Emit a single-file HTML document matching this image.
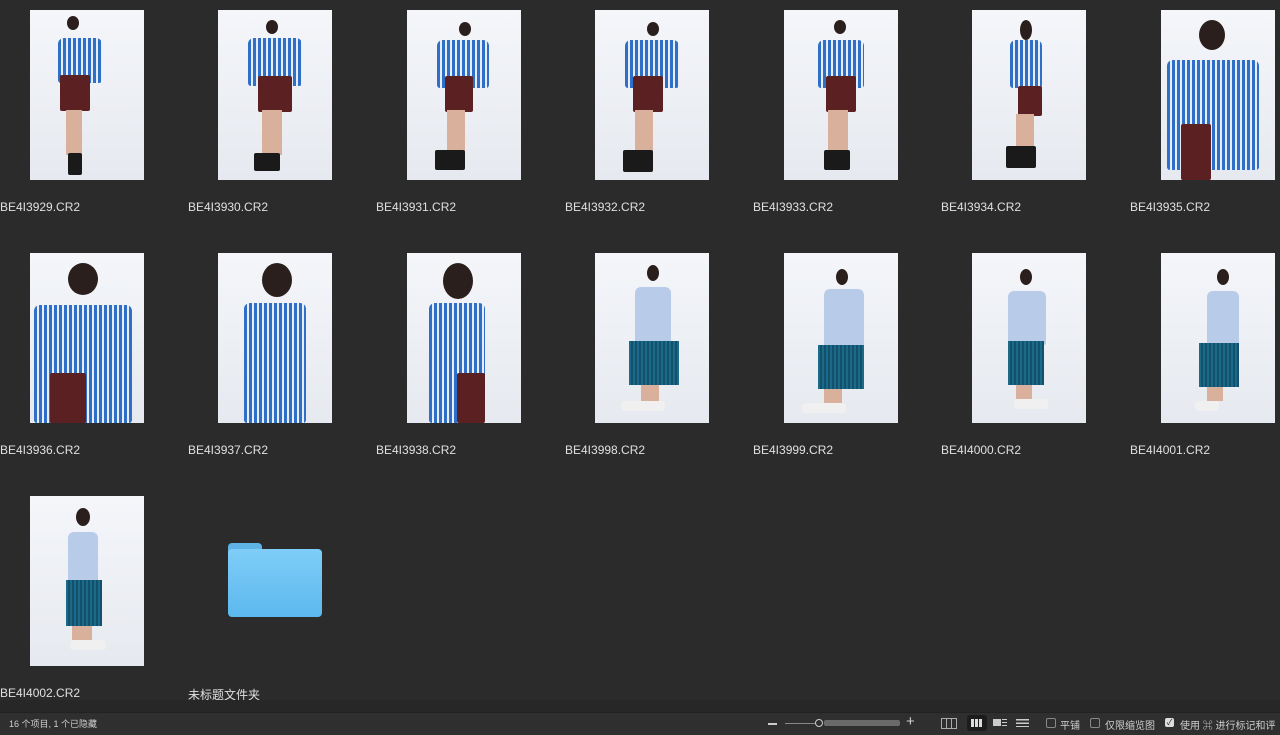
<!DOCTYPE html>
<html><head><meta charset="utf-8"><style>
body{margin:0;width:1280px;height:734px;background:#2b2b2b;overflow:hidden;position:relative;font-family:"Liberation Sans","Noto Sans CJK SC",sans-serif}
.t{position:absolute;width:114px;height:170px;background:linear-gradient(#f4f6fa,#e6e9ef);overflow:hidden}
.t div{position:absolute}
.h{background:#2a1f1c;border-radius:50%}
.s{background:repeating-linear-gradient(90deg,#2f6fc8 0 3px,#e8eef8 3px 5px);border-radius:6px 6px 3px 3px}
.m{background:#5a2022;border-radius:2px}
.l{background:#d8b09c}
.b{background:#1a1a1a;border-radius:2px}
.ls{background:#b8cbe8;border-radius:6px 6px 2px 2px}
.tk{background:repeating-linear-gradient(90deg,#1c6a8a 0 2px,#13506c 2px 4px)}
.w{background:#f0f0f0;border-radius:3px}
.lb{position:absolute;color:#e0e0e0;font-size:12px}
.bar{position:absolute;left:0;top:712px;width:1280px;height:22px;background:#2f2f2f;border-top:1px solid #222}
.bt{position:absolute;top:4px;font-size:10px;color:#cfcfcf}
</style></head><body>

<!-- Row 1 -->
<div class="t" style="left:30px;top:10px"><div class="h" style="left:37px;top:6px;width:12px;height:14px"></div><div class="s" style="left:28px;top:28px;width:44px;height:45px"></div><div class="m" style="left:30px;top:65px;width:30px;height:36px"></div><div class="l" style="left:36px;top:100px;width:16px;height:45px"></div><div class="b" style="left:38px;top:143px;width:14px;height:22px"></div></div>
<div class="t" style="left:218px;top:10px"><div class="h" style="left:48px;top:10px;width:12px;height:14px"></div><div class="s" style="left:30px;top:28px;width:54px;height:48px"></div><div class="m" style="left:40px;top:66px;width:34px;height:36px"></div><div class="l" style="left:44px;top:100px;width:20px;height:45px"></div><div class="b" style="left:36px;top:143px;width:26px;height:18px"></div></div>
<div class="t" style="left:407px;top:10px"><div class="h" style="left:52px;top:12px;width:12px;height:14px"></div><div class="s" style="left:30px;top:30px;width:52px;height:48px"></div><div class="m" style="left:38px;top:66px;width:28px;height:36px"></div><div class="l" style="left:40px;top:100px;width:18px;height:45px"></div><div class="b" style="left:28px;top:140px;width:30px;height:20px"></div></div>
<div class="t" style="left:595px;top:10px"><div class="h" style="left:52px;top:12px;width:12px;height:14px"></div><div class="s" style="left:30px;top:30px;width:54px;height:48px"></div><div class="m" style="left:38px;top:66px;width:30px;height:36px"></div><div class="l" style="left:40px;top:100px;width:18px;height:45px"></div><div class="b" style="left:28px;top:140px;width:30px;height:22px"></div></div>
<div class="t" style="left:784px;top:10px"><div class="h" style="left:50px;top:10px;width:12px;height:14px"></div><div class="s" style="left:34px;top:30px;width:46px;height:48px"></div><div class="m" style="left:42px;top:66px;width:30px;height:36px"></div><div class="l" style="left:44px;top:100px;width:20px;height:45px"></div><div class="b" style="left:40px;top:140px;width:26px;height:20px"></div></div>
<div class="t" style="left:972px;top:10px"><div class="h" style="left:48px;top:10px;width:12px;height:20px"></div><div class="s" style="left:38px;top:30px;width:32px;height:48px"></div><div class="m" style="left:46px;top:76px;width:24px;height:30px"></div><div class="l" style="left:44px;top:104px;width:18px;height:40px"></div><div class="b" style="left:34px;top:136px;width:30px;height:22px"></div></div>
<div class="t" style="left:1161px;top:10px"><div class="h" style="left:38px;top:10px;width:26px;height:30px"></div><div class="s" style="left:6px;top:50px;width:92px;height:110px"></div><div class="m" style="left:20px;top:114px;width:30px;height:56px"></div></div>

<div class="lb" style="left:0;top:200px">BE4I3929.CR2</div>
<div class="lb" style="left:188px;top:200px">BE4I3930.CR2</div>
<div class="lb" style="left:376px;top:200px">BE4I3931.CR2</div>
<div class="lb" style="left:565px;top:200px">BE4I3932.CR2</div>
<div class="lb" style="left:753px;top:200px">BE4I3933.CR2</div>
<div class="lb" style="left:941px;top:200px">BE4I3934.CR2</div>
<div class="lb" style="left:1130px;top:200px">BE4I3935.CR2</div>

<!-- Row 2 -->
<div class="t" style="left:30px;top:253px"><div class="h" style="left:38px;top:10px;width:30px;height:32px"></div><div class="s" style="left:4px;top:52px;width:98px;height:118px"></div><div class="m" style="left:20px;top:120px;width:36px;height:50px"></div></div>
<div class="t" style="left:218px;top:253px"><div class="h" style="left:44px;top:10px;width:30px;height:34px"></div><div class="s" style="left:26px;top:50px;width:62px;height:120px"></div></div>
<div class="t" style="left:407px;top:253px"><div class="h" style="left:36px;top:10px;width:30px;height:36px"></div><div class="s" style="left:22px;top:50px;width:56px;height:120px"></div><div class="m" style="left:50px;top:120px;width:28px;height:50px"></div></div>
<div class="t" style="left:595px;top:253px"><div class="h" style="left:52px;top:12px;width:12px;height:16px"></div><div class="ls" style="left:40px;top:34px;width:36px;height:58px"></div><div class="tk" style="left:34px;top:88px;width:50px;height:44px"></div><div class="l" style="left:46px;top:132px;width:18px;height:18px"></div><div class="w" style="left:26px;top:148px;width:44px;height:10px"></div></div>
<div class="t" style="left:784px;top:253px"><div class="h" style="left:52px;top:16px;width:12px;height:16px"></div><div class="ls" style="left:40px;top:36px;width:40px;height:60px"></div><div class="tk" style="left:34px;top:92px;width:46px;height:44px"></div><div class="l" style="left:40px;top:136px;width:18px;height:14px"></div><div class="w" style="left:18px;top:150px;width:44px;height:10px"></div></div>
<div class="t" style="left:972px;top:253px"><div class="h" style="left:48px;top:16px;width:12px;height:16px"></div><div class="ls" style="left:36px;top:38px;width:38px;height:54px"></div><div class="tk" style="left:36px;top:88px;width:36px;height:44px"></div><div class="l" style="left:44px;top:132px;width:16px;height:16px"></div><div class="w" style="left:42px;top:146px;width:34px;height:10px"></div></div>
<div class="t" style="left:1161px;top:253px"><div class="h" style="left:56px;top:16px;width:12px;height:16px"></div><div class="ls" style="left:46px;top:38px;width:32px;height:54px"></div><div class="tk" style="left:38px;top:90px;width:40px;height:44px"></div><div class="l" style="left:46px;top:134px;width:16px;height:14px"></div><div class="w" style="left:34px;top:148px;width:24px;height:10px"></div></div>

<div class="lb" style="left:0;top:443px">BE4I3936.CR2</div>
<div class="lb" style="left:188px;top:443px">BE4I3937.CR2</div>
<div class="lb" style="left:376px;top:443px">BE4I3938.CR2</div>
<div class="lb" style="left:565px;top:443px">BE4I3998.CR2</div>
<div class="lb" style="left:753px;top:443px">BE4I3999.CR2</div>
<div class="lb" style="left:941px;top:443px">BE4I4000.CR2</div>
<div class="lb" style="left:1130px;top:443px">BE4I4001.CR2</div>

<!-- Row 3 -->
<div class="t" style="left:30px;top:496px"><div class="h" style="left:46px;top:12px;width:14px;height:18px"></div><div class="ls" style="left:38px;top:36px;width:30px;height:60px"></div><div class="tk" style="left:36px;top:84px;width:36px;height:46px"></div><div class="l" style="left:42px;top:130px;width:20px;height:14px"></div><div class="w" style="left:40px;top:144px;width:36px;height:10px"></div></div>
<div style="position:absolute;left:228px;top:543px;width:94px;height:74px">
<div style="position:absolute;left:0;top:0;width:34px;height:12px;background:#5fb2e6;border-radius:4px 4px 0 0"></div>
<div style="position:absolute;left:0;top:6px;width:94px;height:68px;background:linear-gradient(#7fcdf7,#5cb8ee);border-radius:4px"></div>
</div>
<div class="lb" style="left:0;top:686px">BE4I4002.CR2</div>
<div class="lb" style="left:188px;top:686px">未标题文件夹</div>

<div style="position:absolute;left:0;top:700px;width:1280px;height:12px;background:#272727"></div>
<div class="bar">
<div class="bt" style="left:9px;font-size:9px">16 个项目, 1 个已隐藏</div>
<div style="position:absolute;left:768px;top:10px;width:9px;height:1.5px;background:#ccc"></div>
<div style="position:absolute;left:785px;top:10px;width:30px;height:1px;background:#888"></div>
<div style="position:absolute;left:815px;top:6px;width:6px;height:6px;border:1.5px solid #ccc;border-radius:50%"></div>
<div style="position:absolute;left:824px;top:7px;width:76px;height:6px;background:#6a6a6a;border-radius:2px"></div>
<div class="bt" style="left:906px;top:0;font-size:15px">+</div>
<div style="position:absolute;left:941px;top:5px;width:14px;height:9px;border:1px solid #aaa;background:repeating-linear-gradient(90deg,transparent 0 4px,#aaa 4px 5px)"></div>
<div style="position:absolute;left:967px;top:2px;width:20px;height:16px;background:#1c1c1c;border-radius:3px"></div>
<div style="position:absolute;left:971px;top:6px;width:12px;height:8px;background:repeating-linear-gradient(90deg,#ddd 0 3px,#1c1c1c 3px 4px)"></div>
<div style="position:absolute;left:993px;top:6px;width:8px;height:7px;background:#ccc"></div>
<div style="position:absolute;left:1002px;top:6px;width:5px;height:7px;background:repeating-linear-gradient(#ccc 0 1px,transparent 1px 3px)"></div>
<div style="position:absolute;left:1016px;top:6px;width:13px;height:8px;background:repeating-linear-gradient(#ccc 0 1.5px,transparent 1.5px 3.5px)"></div>
<div style="position:absolute;left:1046px;top:5px;width:8px;height:8px;border:1px solid #888;border-radius:2px"></div>
<div class="bt" style="left:1060px">平铺</div>
<div style="position:absolute;left:1090px;top:5px;width:8px;height:8px;border:1px solid #888;border-radius:2px"></div>
<div class="bt" style="left:1105px">仅限缩览图</div>
<div style="position:absolute;left:1165px;top:5px;width:9px;height:9px;background:#ddd;border-radius:2px;color:#222;font-size:8px;line-height:9px;text-align:center">✓</div>
<div class="bt" style="left:1180px;white-space:nowrap">使用 ⌘ 进行标记和评</div>
</div>
</body></html>
